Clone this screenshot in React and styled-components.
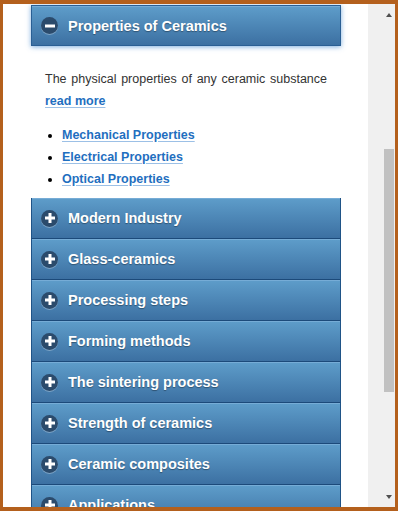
import React from 'react'
import styled, { createGlobalStyle } from 'styled-components'

const Global = createGlobalStyle`
html, body {
  margin: 0;
  padding: 0;
  width: 400px;
  height: 512px;
  overflow: hidden;
  background: #fff;
}
* { box-sizing: border-box; }
`

const Frame = styled.div`
width: 398px;
height: 511px;
border-top: 4px solid #b4601d;
border-left: 3px solid #b4601d;
border-right: 3px solid #b4601d;
border-bottom: 4px solid #b4601d;
display: flex;
overflow: hidden;
background: #fff;
`

const Page = styled.div`
flex: 1;
overflow: hidden;
padding: 1px 27px 0 28px;
font-family: "Liberation Sans", Arial, sans-serif;
`

const Scrollbar = styled.div`
width: 27px;
background: #f0f0f0;
display: flex;
flex-direction: column;
align-items: flex-end;
padding: 0 1px 0 0;
position: relative;
`

const Arrow = styled.div`
width: 10px;
height: 17px;
display: flex;
align-items: center;
justify-content: center;
margin-top: ${p => p.$down ? 'auto' : '2px'};
margin-bottom: ${p => p.$down ? '2px' : '0'};
&::after {
  content: '';
  border-left: 3.5px solid transparent;
  border-right: 3.5px solid transparent;
  ${p => p.$down ? 'border-top: 4px solid #505050;' : 'border-bottom: 4px solid #505050;'}
}
`

const Thumb = styled.div`
position: absolute;
right: 1px;
top: 145px;
width: 10px;
height: 243px;
background: #c1c1c1;
`

const Header = styled.div`
height: 41px;
display: flex;
align-items: center;
padding-left: 9px;
background: linear-gradient(#5e9dca, #3c70a2);
border-left: 1px solid #1f5387;
border-right: 1px solid #1f5387;
border-bottom: 1px solid #1c4a7a;
box-shadow: inset 0 1px 0 #76acd6;
color: #fff;
font-weight: bold;
font-size: 14.5px;
text-shadow: 0 1px 1px rgba(0, 0, 0, 0.35);
position: relative;
${p => p.$open && `
  border: 1px solid #2a5f94;
  box-shadow: inset 0 1px 0 #76acd6, 0 1px 5px rgba(70, 140, 210, 0.7);
  z-index: 1;
`}
`

const Icon = styled.span`
width: 17px;
height: 17px;
border-radius: 50%;
background: #2b4b6c;
box-shadow: 0 1px 0 rgba(255, 255, 255, 0.3);
position: relative;
margin-right: 10px;
flex-shrink: 0;
&::before, &::after {
  content: '';
  position: absolute;
  background: #fff;
  left: 50%;
  top: 50%;
}
&::before {
  width: 10px;
  height: 3px;
  transform: translate(-50%, -50%);
}
&::after {
  width: 3px;
  height: 10px;
  transform: translate(-50%, -50%);
  display: ${p => p.$open ? 'none' : 'block'};
}
`

const Panel = styled.div`
padding: 22px 14px 8px;
color: #333;
font-size: 12.5px;
line-height: 22px;
`

const Text = styled.div`
margin: 0 0 12px;
`

const Sentence = styled.span`
display: block;
text-align: justify;
text-align-last: justify;
white-space: nowrap;
`

const Link = styled.a`
color: #1f6fc0;
font-weight: bold;
text-decoration: underline;
text-decoration-color: #9cc0e6;
text-underline-offset: 2px;
`

const List = styled.ul`
margin: 0;
padding-left: 17px;
li::marker { color: #000; }
`

const sections = [
  'Modern Industry',
  'Glass-ceramics',
  'Processing steps',
  'Forming methods',
  'The sintering process',
  'Strength of ceramics',
  'Ceramic composites',
  'Applications',
]

export default function App() {
  return (
    <>
      <Global />
      <Frame>
        <Page>
          <Header $open>
            <Icon $open />
            Properties of Ceramics
          </Header>
          <Panel>
            <Text>
              <Sentence>The physical properties of any ceramic substance</Sentence>
              <Link href="#more">read more</Link>
            </Text>
            <List>
              <li><Link href="#m">Mechanical Properties</Link></li>
              <li><Link href="#e">Electrical Properties</Link></li>
              <li><Link href="#o">Optical Properties</Link></li>
            </List>
          </Panel>
          {sections.map(s => (
            <Header key={s}>
              <Icon />
              {s}
            </Header>
          ))}
        </Page>
        <Scrollbar>
          <Arrow />
          <Thumb />
          <Arrow $down />
        </Scrollbar>
      </Frame>
    </>
  )
}
